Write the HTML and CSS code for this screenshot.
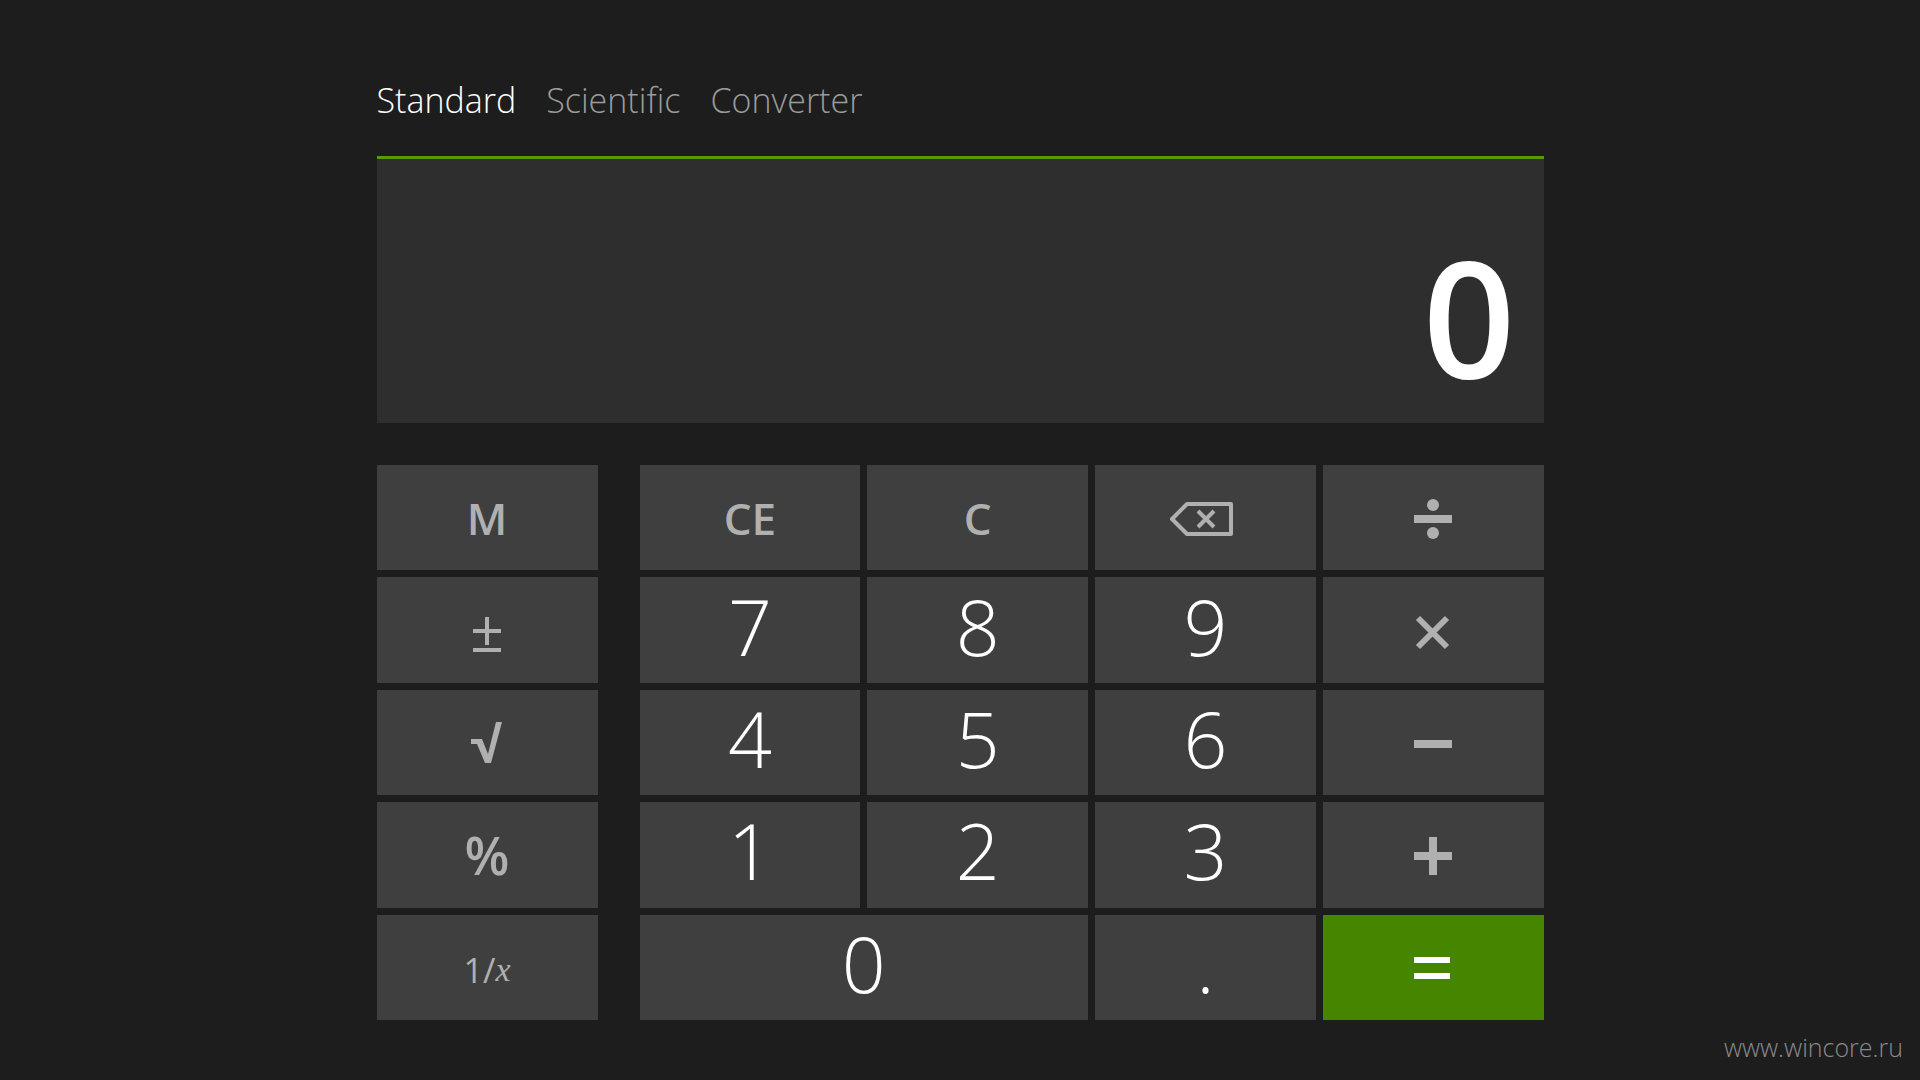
FILE: index.html
```
<!DOCTYPE html>
<html lang="en">
<head>
  <meta charset="UTF-8" />
  <meta name="viewport" content="width=device-width, initial-scale=1.0"/>
  <title>Calculator</title>
  <link rel="stylesheet" href="styles.css">
</head>
<body>
  <main class="calculator">
    <nav class="tabs">
      <a class="tab active" href="#standard">Standard</a>
      <a class="tab" href="#scientific">Scientific</a>
      <a class="tab" href="#converter">Converter</a>
    </nav>

    <output class="display" id="display">0</output>

    <div class="keypad">
      <div class="functions">
        <button>M</button>
        <button aria-label="Plus minus">
          <svg class="icon" viewBox="0 0 48 48"><path d="M10 23h28M24 9v28M10 42h28" stroke-width="4"/></svg>
        </button>
        <button aria-label="Square root">
          <svg class="icon" viewBox="0 0 48 48"><path class="solid" d="M39 2h-6l-8 32-6-15H8v5h6l8 19h6z"/></svg>
        </button>
        <button class="key-percent">%</button>
        <button class="key-inverse">1/<i>x</i></button>
      </div>

      <div class="buttons">
        <button onclick="clearDisplay()">CE</button>
        <button onclick="clearDisplay()">C</button>
        <button aria-label="Backspace" onclick="deleteLast()">
          <svg class="icon wide" viewBox="0 0 72 48"><path d="M62 9v30H18L3 24 18 9zM29 16l16 16M45 16L29 32" stroke-width="4" stroke-linejoin="round"/></svg>
        </button>
        <button aria-label="Divide">
          <svg class="icon" viewBox="0 0 48 48"><path d="M5 24h38" stroke-width="8"/><circle class="solid" cx="24" cy="10" r="6"/><circle class="solid" cx="24" cy="38" r="6"/></svg>
        </button>

        <button class="digit" onclick="append('7')">7</button>
        <button class="digit" onclick="append('8')">8</button>
        <button class="digit" onclick="append('9')">9</button>
        <button aria-label="Multiply">
          <svg class="icon" viewBox="0 0 48 48"><path d="M9 10l29 29M38 10L9 39" stroke-width="6"/></svg>
        </button>

        <button class="digit" onclick="append('4')">4</button>
        <button class="digit" onclick="append('5')">5</button>
        <button class="digit" onclick="append('6')">6</button>
        <button aria-label="Minus">
          <svg class="icon" viewBox="0 0 48 48"><path d="M5 24h38" stroke-width="8"/></svg>
        </button>

        <button class="digit" onclick="append('1')">1</button>
        <button class="digit" onclick="append('2')">2</button>
        <button class="digit" onclick="append('3')">3</button>
        <button aria-label="Plus">
          <svg class="icon" viewBox="0 0 48 48"><path d="M5 24h38M24 5v38" stroke-width="8"/></svg>
        </button>

        <button class="digit zero" onclick="append('0')">0</button>
        <button class="digit" onclick="append('.')">.</button>
        <button class="btn-green" aria-label="Equals">
          <svg class="icon" viewBox="0 0 48 48"><path d="M5 15h36M5 31h36" stroke-width="6"/></svg>
        </button>
      </div>
    </div>
  </main>
  <footer class="site">www.wincore.ru</footer>

  <script>
    const display = document.getElementById("display");

    function append(char) {
      if (char === "." && display.innerText.includes(".")) return;
      if (display.innerText === "0" && char !== ".") {
        display.innerText = char;
      } else {
        display.innerText += char;
      }
    }

    function clearDisplay() {
      display.innerText = "0";
    }

    function deleteLast() {
      display.innerText = display.innerText.slice(0, -1) || "0";
    }
  </script>
</body>
</html>
```
FILE: styles.css
```
* { box-sizing: border-box; }
body {
  margin: 0;
  min-height: 100vh;
  display: flex;
  flex-direction: column;
  font-family: 'Open Sans', 'Noto Sans', sans-serif;
  background-color: #1d1d1d;
  color: #fff;
}
.calculator {
  flex: 1;
  display: flex;
  flex-direction: column;
  width: 100%;
  max-width: 1167px;
  margin: 0 auto;
}
.tabs {
  display: flex;
  align-items: center;
  gap: 30px;
  height: 156px;
  padding-top: 43px;
  font-size: 34px;
  font-weight: 300;
}
.tab {
  color: #9b9b9b;
  text-decoration: none;
}
.tab.active { color: #fff; }
.display {
  display: flex;
  justify-content: flex-end;
  align-items: flex-end;
  height: 267px;
  padding: 0 28px 27px;
  border-top: 3px solid #5a9a00;
  background-color: #2e2e2e;
  font-size: 162px;
  font-weight: 600;
  line-height: 1;
}
.keypad {
  flex: 1;
  display: grid;
  grid-template-columns: 221fr 904fr;
  gap: 42px;
  margin-top: 42px;
}
.functions,
.buttons {
  display: grid;
  grid-template-rows: repeat(5, 1fr);
  gap: 7px;
}
.buttons { grid-template-columns: repeat(4, 1fr); }
button {
  display: flex;
  justify-content: center;
  align-items: center;
  min-width: 0;
  padding: 0;
  border: none;
  background-color: #3f3f3f;
  color: #b0b0b0;
  font-family: inherit;
  font-size: 44px;
  font-weight: 600;
  line-height: 1;
  cursor: pointer;
}
button:active { background-color: #555; }
.digit {
  padding-bottom: 8px;
  color: #fff;
  font-size: 77px;
  font-weight: 300;
}
.zero { grid-column: span 2; }
.key-percent { font-size: 52px; }
.key-inverse {
  padding-top: 6px;
  font-size: 34px;
  font-weight: 400;
}
.key-inverse i { font-family: 'Liberation Serif', serif; }
.btn-green {
  background-color: #458500;
  color: #fff;
}
.icon {
  width: 48px;
  height: 48px;
  margin-top: 3px;
  fill: none;
  stroke: currentColor;
}
.icon .solid {
  fill: currentColor;
  stroke: none;
}
.icon.wide { width: 72px; }
.site {
  height: 60px;
  padding-right: 17px;
  color: #8a8a8a;
  font-size: 25px;
  font-weight: 300;
  line-height: 54px;
  text-align: right;
}
```
